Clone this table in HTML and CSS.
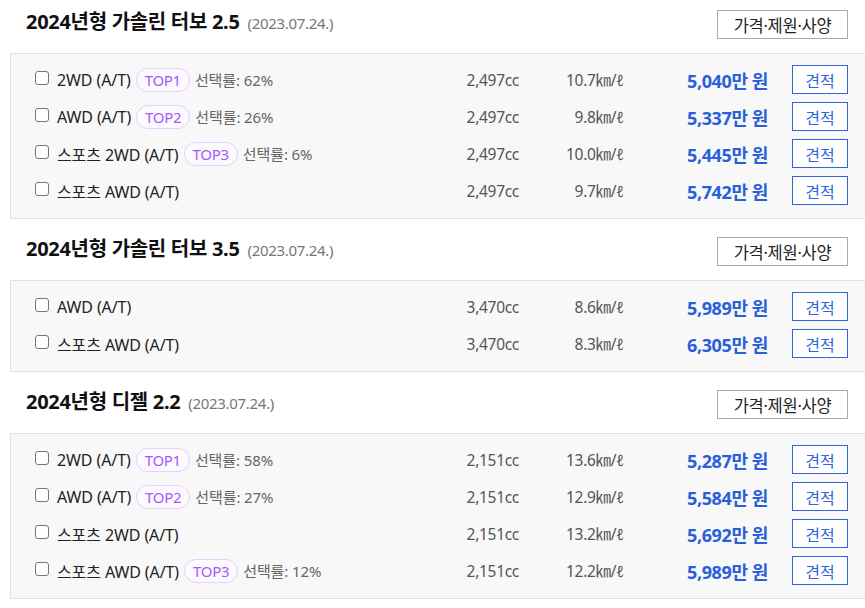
FILE: index.html
```html
<!DOCTYPE html>
<html lang="ko">
<head>
    <meta charset="UTF-8">
    <meta name="viewport" content="width=device-width, initial-scale=1.0">
    <title>트림 선택</title>
    <link rel="stylesheet" href="styles.css">
</head>
<body>
<div class="page">

    <!-- 가솔린 터보 2.5 -->
    <div class="section">
        <div class="section-head">
            <h2>2024년형 가솔린 터보 2.5 <span class="date">(2023.07.24.)</span></h2>
            <button class="btn-spec">가격·제원·사양</button>
        </div>
        <div class="trim-box">
            <div class="trim">
                <label class="name"><input type="checkbox"> 2WD (A/T) <span class="top">TOP1</span> <span class="rate">선택률: 62%</span></label>
                <span class="cc">2,497cc</span>
                <span class="eff">10.7㎞/ℓ</span>
                <span class="price">5,040만 원</span>
                <button class="btn-quote">견적</button>
            </div>
            <div class="trim">
                <label class="name"><input type="checkbox"> AWD (A/T) <span class="top">TOP2</span> <span class="rate">선택률: 26%</span></label>
                <span class="cc">2,497cc</span>
                <span class="eff">9.8㎞/ℓ</span>
                <span class="price">5,337만 원</span>
                <button class="btn-quote">견적</button>
            </div>
            <div class="trim">
                <label class="name"><input type="checkbox"> 스포츠 2WD (A/T) <span class="top">TOP3</span> <span class="rate">선택률: 6%</span></label>
                <span class="cc">2,497cc</span>
                <span class="eff">10.0㎞/ℓ</span>
                <span class="price">5,445만 원</span>
                <button class="btn-quote">견적</button>
            </div>
            <div class="trim">
                <label class="name"><input type="checkbox"> 스포츠 AWD (A/T)</label>
                <span class="cc">2,497cc</span>
                <span class="eff">9.7㎞/ℓ</span>
                <span class="price">5,742만 원</span>
                <button class="btn-quote">견적</button>
            </div>
        </div>
    </div>

    <!-- 가솔린 터보 3.5 -->
    <div class="section">
        <div class="section-head">
            <h2>2024년형 가솔린 터보 3.5 <span class="date">(2023.07.24.)</span></h2>
            <button class="btn-spec">가격·제원·사양</button>
        </div>
        <div class="trim-box">
            <div class="trim">
                <label class="name"><input type="checkbox"> AWD (A/T)</label>
                <span class="cc">3,470cc</span>
                <span class="eff">8.6㎞/ℓ</span>
                <span class="price">5,989만 원</span>
                <button class="btn-quote">견적</button>
            </div>
            <div class="trim">
                <label class="name"><input type="checkbox"> 스포츠 AWD (A/T)</label>
                <span class="cc">3,470cc</span>
                <span class="eff">8.3㎞/ℓ</span>
                <span class="price">6,305만 원</span>
                <button class="btn-quote">견적</button>
            </div>
        </div>
    </div>

    <!-- 디젤 2.2 -->
    <div class="section">
        <div class="section-head">
            <h2>2024년형 디젤 2.2 <span class="date">(2023.07.24.)</span></h2>
            <button class="btn-spec">가격·제원·사양</button>
        </div>
        <div class="trim-box">
            <div class="trim">
                <label class="name"><input type="checkbox"> 2WD (A/T) <span class="top">TOP1</span> <span class="rate">선택률: 58%</span></label>
                <span class="cc">2,151cc</span>
                <span class="eff">13.6㎞/ℓ</span>
                <span class="price">5,287만 원</span>
                <button class="btn-quote">견적</button>
            </div>
            <div class="trim">
                <label class="name"><input type="checkbox"> AWD (A/T) <span class="top">TOP2</span> <span class="rate">선택률: 27%</span></label>
                <span class="cc">2,151cc</span>
                <span class="eff">12.9㎞/ℓ</span>
                <span class="price">5,584만 원</span>
                <button class="btn-quote">견적</button>
            </div>
            <div class="trim">
                <label class="name"><input type="checkbox"> 스포츠 2WD (A/T)</label>
                <span class="cc">2,151cc</span>
                <span class="eff">13.2㎞/ℓ</span>
                <span class="price">5,692만 원</span>
                <button class="btn-quote">견적</button>
            </div>
            <div class="trim">
                <label class="name"><input type="checkbox"> 스포츠 AWD (A/T) <span class="top">TOP3</span> <span class="rate">선택률: 12%</span></label>
                <span class="cc">2,151cc</span>
                <span class="eff">12.2㎞/ℓ</span>
                <span class="price">5,989만 원</span>
                <button class="btn-quote">견적</button>
            </div>
        </div>
    </div>

</div>
</body>
</html>
```

FILE: styles.css
```css
body {
    margin: 0;
    overflow: hidden;
    background: #fff;
    color: #222;
    font-family: "Noto Sans", "Noto Sans CJK KR", sans-serif;
}

.page {
    width: 885px;
    padding-top: 10px;
}

.section {
    margin-bottom: 18px;
}

.section-head {
    display: flex;
    align-items: center;
    justify-content: space-between;
    height: 29px;
    padding: 0 37px 0 26px;
    margin-bottom: 14px;
}

.section-head h2 {
    margin: 0 0 4px;
    font-size: 20px;
    line-height: 24px;
    font-weight: bold;
    color: #111;
    letter-spacing: -0.3px;
}

.date {
    margin-left: 3px;
    font-size: 15px;
    font-weight: normal;
    color: #777;
    letter-spacing: -0.3px;
}

.btn-spec {
    width: 131px;
    height: 29px;
    border: 1px solid #aaa;
    background: #fff;
    color: #222;
    font-family: inherit;
    font-size: 16.5px;
    letter-spacing: -0.3px;
    padding: 0;
}

.trim-box {
    margin-left: 10px;
    border: 1px solid #e2e2e2;
    background: #f8f8f8;
    padding: 7px 36px 9px 24px;
}

.trim {
    display: grid;
    grid-template-columns: 1fr 90px 105px 144px 80px;
    align-items: center;
    height: 37px;
    font-size: 16px;
}

.name {
    display: flex;
    align-items: center;
    gap: 5px;
    color: #222;
    white-space: nowrap;
    letter-spacing: -0.1px;
}

.name input {
    appearance: none;
    margin: 0 3px 0 0;
    width: 14px;
    height: 14px;
    border: 1px solid #767676;
    border-radius: 3px;
    background: #fff;
    position: relative;
    top: -2px;
}

.top {
    display: inline-block;
    height: 22px;
    line-height: 22px;
    padding: 0 8px;
    border: 1px solid #e5d0ff;
    border-radius: 12px;
    background: #fcf9ff;
    color: #a45cf6;
    font-size: 15px;
    letter-spacing: -0.3px;
}

.rate {
    font-size: 15px;
    color: #666;
}

.cc, .eff {
    text-align: right;
    color: #555;
    font-size: 15.5px;
    letter-spacing: -0.3px;
}

.price {
    text-align: right;
    color: #2a5fdb;
    font-weight: bold;
    font-size: 18px;
    letter-spacing: -0.4px;
}

.btn-quote {
    justify-self: end;
    width: 56px;
    height: 29px;
    border: 1px solid #2f66dc;
    background: #fff;
    color: #2f66dc;
    font-family: inherit;
    font-size: 16px;
    padding: 0;
}
```
